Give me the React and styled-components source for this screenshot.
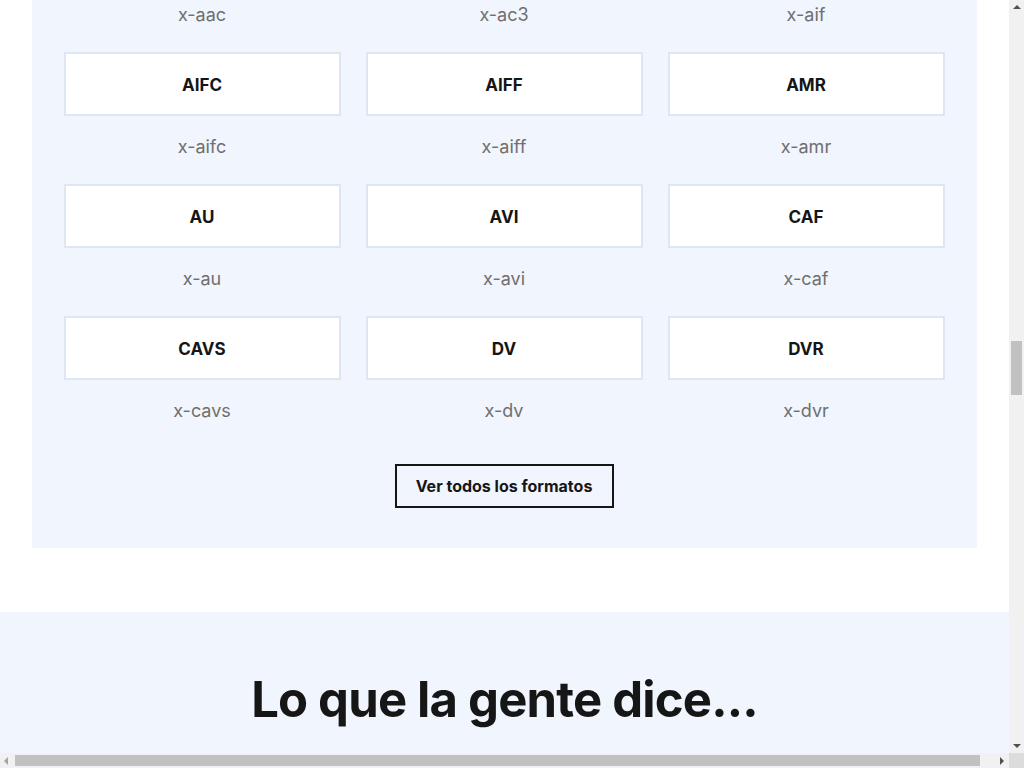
import React, { useLayoutEffect, useRef } from "react";
import styled, { createGlobalStyle } from "styled-components";

const GlobalStyle = createGlobalStyle`
  html, body {
    margin: 0;
    background: #ffffff;
    font-family: Inter, "Noto Sans", sans-serif;
    color: #161616;
    overflow-x: hidden;
  }
`;

const Page = styled.div`
  width: 1009px;
  padding-top: 64px;
`;

const FormatsWrap = styled.section`
  padding: 0 32px;
`;

const Panel = styled.div`
  background: #f0f5fe;
  padding: 64px 33px 40px 32px;
  display: flex;
  flex-direction: column;
  align-items: center;
`;

const Grid = styled.div`
  display: grid;
  grid-template-columns: repeat(3, 277px);
  column-gap: 25px;
`;

const Cell = styled.div`
  display: flex;
  flex-direction: column;
`;

const Card = styled.div`
  height: 64px;
  box-sizing: border-box;
  padding-top: 2px;
  background: #ffffff;
  border: 2px solid #dee6f4;
  display: flex;
  align-items: center;
  justify-content: center;
  font-size: 17px;
  font-weight: 700;
  color: #161616;
`;

const Mime = styled.div`
  padding: 19px 0 25px;
  line-height: 24px;
  text-align: center;
  font-size: 18px;
  color: #6f6f6f;
`;

const AllButton = styled.button`
  margin-top: 16px;
  height: 44px;
  width: 219px;
  box-sizing: border-box;
  padding-top: 1px;
  background: transparent;
  border: 2px solid #161616;
  font-family: inherit;
  font-size: 16px;
  font-weight: 700;
  color: #161616;
  cursor: pointer;
`;

const Testimonials = styled.section`
  margin-top: 64px;
  min-height: 520px;
  background: #f0f5fe;
  padding-top: 58px;
  box-sizing: border-box;
`;

const Heading = styled.h2`
  margin: 0;
  text-align: center;
  font-size: 49px;
  font-weight: 700;
  letter-spacing: -0.8px;
  line-height: 60px;
  color: #161616;
`;

/* browser-like scrollbars drawn over the page */
const VTrack = styled.div`
  position: fixed;
  top: 0;
  right: 0;
  width: 15px;
  height: 753px;
  background: #f1f1f1;
`;

const HTrack = styled.div`
  position: fixed;
  left: 0;
  bottom: 0;
  width: 1009px;
  height: 15px;
  background: #f1f1f1;
`;

const Corner = styled.div`
  position: fixed;
  right: 0;
  bottom: 0;
  width: 15px;
  height: 15px;
  background: #dcdcdc;
`;

const Thumb = styled.div`
  position: absolute;
  background: #c1c1c1;
  ${(p) =>
    p.$vertical
      ? `left: 2px; width: 11px; top: 341px; height: 54px;`
      : `top: 2px; height: 11px; left: 15px; width: 965px;`}
`;

const Arrow = styled.div`
  position: absolute;
  width: 0;
  height: 0;
  ${(p) => {
    const c = p.$disabled ? "#a3a3a3" : "#505050";
    switch (p.$dir) {
      case "up":
        return `top: 5px; left: 4px; border-left: 4px solid transparent; border-right: 4px solid transparent; border-bottom: 4px solid ${c};`;
      case "down":
        return `bottom: 5px; left: 4px; border-left: 4px solid transparent; border-right: 4px solid transparent; border-top: 4px solid ${c};`;
      case "left":
        return `left: 4px; top: 4px; border-top: 4px solid transparent; border-bottom: 4px solid transparent; border-right: 4px solid ${c};`;
      default:
        return `right: 5px; top: 4px; border-top: 4px solid transparent; border-bottom: 4px solid transparent; border-left: 4px solid ${c};`;
    }
  }}
`;

const formats = [
  ["AAC", "x-aac"],
  ["AC3", "x-ac3"],
  ["AIF", "x-aif"],
  ["AIFC", "x-aifc"],
  ["AIFF", "x-aiff"],
  ["AMR", "x-amr"],
  ["AU", "x-au"],
  ["AVI", "x-avi"],
  ["CAF", "x-caf"],
  ["CAVS", "x-cavs"],
  ["DV", "x-dv"],
  ["DVR", "x-dvr"],
];

export default function App() {
  const anchor = useRef(null);

  useLayoutEffect(() => {
    if (!anchor.current) return;
    const top = anchor.current.getBoundingClientRect().top + window.scrollY;
    window.scrollTo(0, top - 52);
  }, []);

  return (
    <>
      <GlobalStyle />
      <Page>
        <FormatsWrap>
          <Panel>
            <Grid>
              {formats.map(([name, mime], i) => (
                <Cell key={name}>
                  <Card ref={i === 3 ? anchor : null}>{name}</Card>
                  <Mime>{mime}</Mime>
                </Cell>
              ))}
            </Grid>
            <AllButton>Ver todos los formatos</AllButton>
          </Panel>
        </FormatsWrap>
        <Testimonials>
          <Heading>Lo que la gente dice...</Heading>
        </Testimonials>
      </Page>
      <VTrack>
        <Arrow $dir="up" />
        <Thumb $vertical />
        <Arrow $dir="down" />
      </VTrack>
      <HTrack>
        <Arrow $dir="left" $disabled />
        <Thumb />
        <Arrow $dir="right" />
      </HTrack>
      <Corner />
    </>
  );
}
